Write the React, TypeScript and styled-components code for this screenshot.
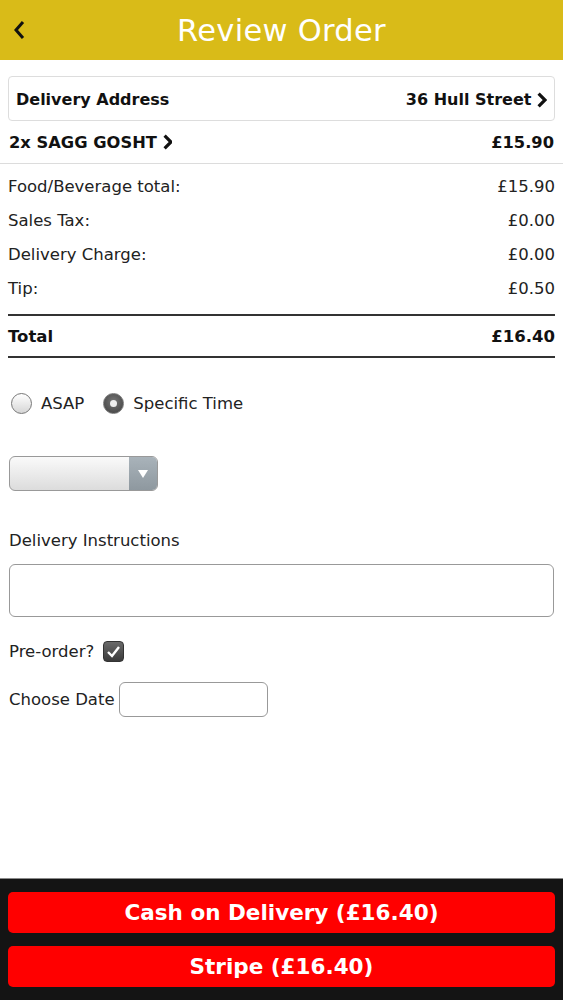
import * as React from "react";
import styled, { createGlobalStyle } from "styled-components";

const GlobalStyle = createGlobalStyle`
  html, body {
    margin: 0;
    padding: 0;
    background: #ffffff;
  }
  body {
    font-family: "DejaVu Sans", Verdana, sans-serif;
    color: #111111;
  }
`;

const Page = styled.div`
  width: 563px;
  height: 1000px;
  display: flex;
  flex-direction: column;
  background: #ffffff;
`;

const Header = styled.header`
  height: 60px;
  background: #d9bb18;
  display: flex;
  align-items: center;
  justify-content: center;
  position: relative;
`;

const BackButton = styled.span`
  position: absolute;
  left: 12px;
  top: 19px;
  display: flex;
`;

const Title = styled.h1`
  margin: 0;
  color: #ffffff;
  font-size: 30.5px;
  font-weight: normal;
  letter-spacing: 0.3px;
`;

const Content = styled.main`
  flex: 1;
  display: flex;
  flex-direction: column;
  padding-top: 16px;
`;

const AddressBox = styled.div`
  margin: 0 8px;
  height: 41px;
  border: 1px solid #dddddd;
  border-radius: 4px;
  display: flex;
  align-items: center;
  justify-content: space-between;
  padding: 2px 7px 0;
  font-weight: bold;
  font-size: 16px;
`;

const Chevron = styled.span`
  display: inline-flex;
  align-items: center;
  gap: 6px;
`;

const ItemRow = styled.div`
  height: 42px;
  display: flex;
  align-items: center;
  justify-content: space-between;
  padding: 0 9px;
  border-bottom: 1px solid #dcdcdc;
  font-weight: bold;
  font-size: 16.3px;
`;

const Summary = styled.div`
  padding: 5px 8px 0;
  display: flex;
  flex-direction: column;
`;

const SummaryRow = styled.div<{ $bold?: boolean }>`
  height: 34px;
  display: flex;
  align-items: center;
  justify-content: space-between;
  font-size: 16.5px;
  font-weight: ${(p) => (p.$bold ? "bold" : "normal")};
  color: #222222;
`;

const TotalRow = styled(SummaryRow)`
  height: 40px;
  margin-top: 9px;
  font-size: 16.5px;
  border-top: 2px solid #333333;
  border-bottom: 2px solid #333333;
  color: #111111;
`;

const RadioGroup = styled.div`
  display: flex;
  align-items: center;
  margin: 35px 0 0 11px;
  font-size: 16.5px;
  color: #222222;
`;

const RadioLabel = styled.label`
  display: flex;
  align-items: center;
  gap: 9px;
  margin-right: 19px;
`;

const Radio = styled.span<{ $checked?: boolean }>`
  width: 21px;
  height: 21px;
  box-sizing: border-box;
  border-radius: 50%;
  border: 1px solid #777777;
  display: flex;
  align-items: center;
  justify-content: center;
  background: ${(p) =>
    p.$checked
      ? "radial-gradient(circle at 50% 40%, #777 0%, #3d3d3d 100%)"
      : "linear-gradient(#ffffff, #d6d6d6)"};

  &::after {
    content: "";
    display: ${(p) => (p.$checked ? "block" : "none")};
    width: 7px;
    height: 7px;
    border-radius: 50%;
    background: #eeeeee;
  }
`;

const Select = styled.div`
  margin: 42px 0 0 9px;
  width: 149px;
  height: 35px;
  box-sizing: border-box;
  border: 1px solid #999999;
  border-radius: 6px;
  overflow: hidden;
  display: flex;
  background: linear-gradient(#fafafa, #dcdcdc);
`;

const SelectArrow = styled.span`
  margin-left: auto;
  width: 28px;
  background: linear-gradient(#a9b3ba, #8e989f);
  display: flex;
  align-items: center;
  justify-content: center;

  &::after {
    content: "";
    border-left: 5px solid transparent;
    border-right: 5px solid transparent;
    border-top: 8px solid #ffffff;
  }
`;

const FieldLabel = styled.div`
  margin: 40px 0 0 9px;
  font-size: 16.5px;
  color: #222222;
`;

const TextArea = styled.div`
  margin: 14px 9px 0;
  height: 53px;
  box-sizing: border-box;
  border: 1px solid #999999;
  border-radius: 6px;
`;

const InlineField = styled.div<{ $gap: number; $top: number }>`
  display: flex;
  align-items: center;
  gap: ${(p) => p.$gap}px;
  margin: ${(p) => p.$top}px 0 0 9px;
  font-size: 16.5px;
  color: #222222;
`;

const Checkbox = styled.span`
  width: 21px;
  height: 21px;
  box-sizing: border-box;
  border-radius: 4px;
  border: 1px solid #333333;
  background: linear-gradient(#6a6a6a, #3a3a3a);
  display: flex;
  align-items: center;
  justify-content: center;
`;

const DateInput = styled.div`
  width: 149px;
  height: 35px;
  box-sizing: border-box;
  border: 1px solid #999999;
  border-radius: 6px;
`;

const Footer = styled.footer`
  background: #141414;
  border-top: 1px solid #8a8a8a;
  padding: 13px 8px 13px;
  display: flex;
  flex-direction: column;
  gap: 13px;
`;

const PayButton = styled.button`
  height: 41px;
  border: none;
  border-radius: 5px;
  background: #ff0000;
  color: #ffffff;
  font-family: "DejaVu Sans", Verdana, sans-serif;
  font-weight: bold;
  font-size: 21.5px;
  cursor: pointer;
`;

const ArrowIcon: React.FC<{ size?: number; stroke?: number }> = ({ size = 14, stroke = 3 }) => (
  <svg width={size * 0.6} height={size} viewBox="0 0 9 15">
    <path d="M1.5 1.5 L7.5 7.5 L1.5 13.5" fill="none" stroke="#111" strokeWidth={stroke} />
  </svg>
);

const rows = [
  { label: "Food/Beverage total:", value: "£15.90" },
  { label: "Sales Tax:", value: "£0.00" },
  { label: "Delivery Charge:", value: "£0.00" },
  { label: "Tip:", value: "£0.50" },
];

const App: React.FC = () => {
  return (
    <Page>
      <GlobalStyle />
      <Header>
        <BackButton>
          <svg width="14" height="22" viewBox="0 0 14 22">
            <path d="M11 3 L4 11 L11 19" fill="none" stroke="#111" strokeWidth="3" />
          </svg>
        </BackButton>
        <Title>Review Order</Title>
      </Header>
      <Content>
        <AddressBox>
          <span>Delivery Address</span>
          <Chevron>
            36 Hull Street <ArrowIcon size={16} />
          </Chevron>
        </AddressBox>
        <ItemRow>
          <Chevron>
            2x SAGG GOSHT <ArrowIcon size={16} />
          </Chevron>
          <span>£15.90</span>
        </ItemRow>
        <Summary>
          {rows.map((r) => (
            <SummaryRow key={r.label}>
              <span>{r.label}</span>
              <span>{r.value}</span>
            </SummaryRow>
          ))}
          <TotalRow $bold>
            <span>Total</span>
            <span>£16.40</span>
          </TotalRow>
        </Summary>
        <RadioGroup>
          <RadioLabel>
            <Radio />
            ASAP
          </RadioLabel>
          <RadioLabel>
            <Radio $checked />
            Specific Time
          </RadioLabel>
        </RadioGroup>
        <Select>
          <SelectArrow />
        </Select>
        <FieldLabel>Delivery Instructions</FieldLabel>
        <TextArea />
        <InlineField $gap={9} $top={24}>
          Pre-order?
          <Checkbox>
            <svg width="15" height="13" viewBox="0 0 15 13">
              <path d="M2 7 L6 11 L13 2" fill="none" stroke="#fff" strokeWidth="2.4" />
            </svg>
          </Checkbox>
        </InlineField>
        <InlineField $gap={4} $top={20}>
          Choose Date
          <DateInput />
        </InlineField>
      </Content>
      <Footer>
        <PayButton>Cash on Delivery (£16.40)</PayButton>
        <PayButton>Stripe (£16.40)</PayButton>
      </Footer>
    </Page>
  );
};

export default App;
